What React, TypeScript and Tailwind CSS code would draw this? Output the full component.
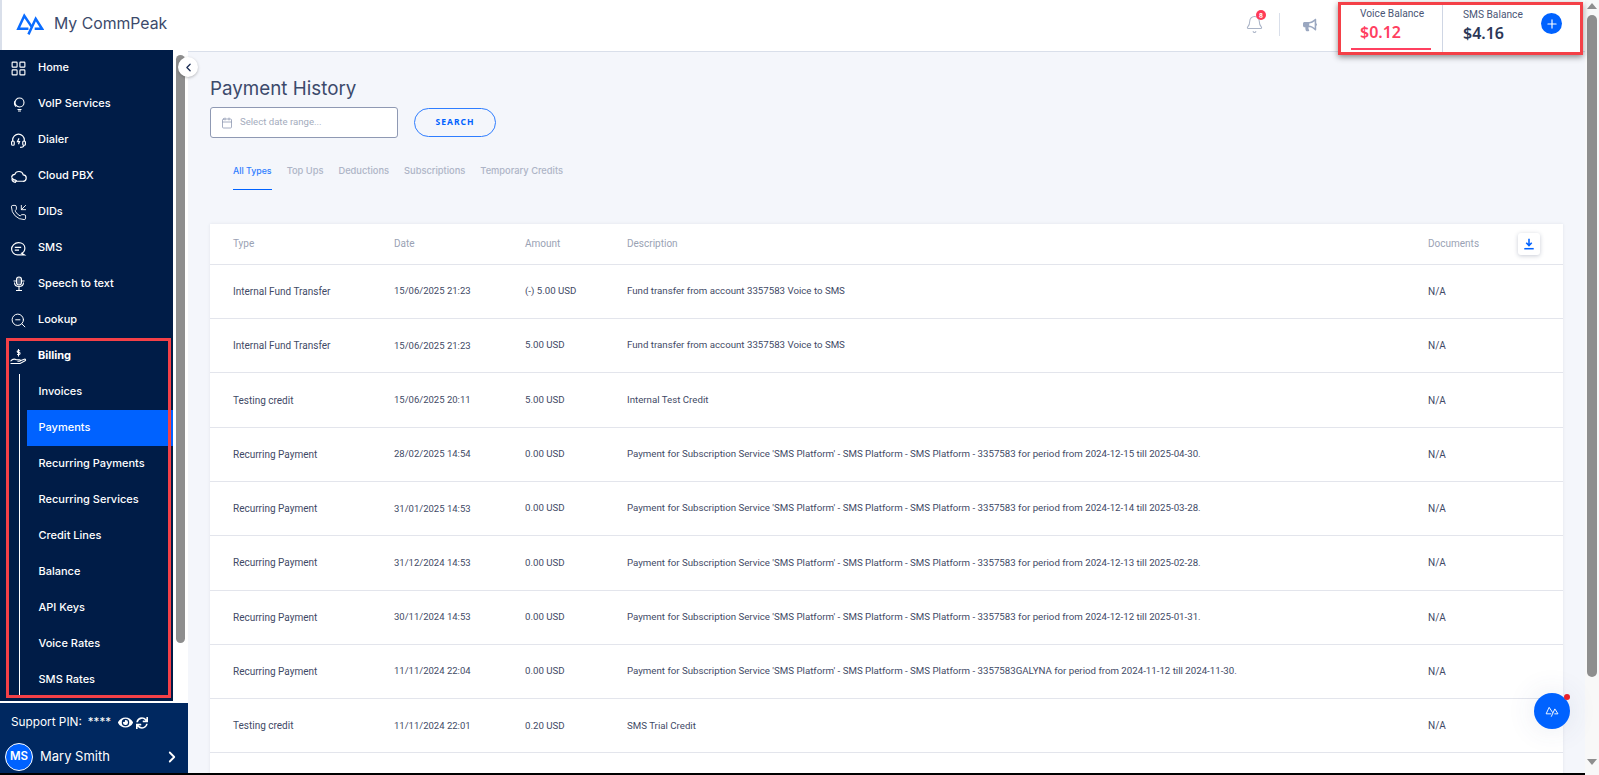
import React from 'react';
import { Bell, Calendar, ChevronLeft, ChevronRight, LayoutGrid, PhoneIncoming, Plus, ZoomOut } from 'lucide-react';
import { FaBullhorn, FaEye, FaSync } from 'react-icons/fa';

const Logo = ({ className, color, weight = 2.4 }: { className: string; color: string; weight?: number }) => (
  <svg viewBox="0 0 27 21" className={className} fill="none" stroke={color} strokeWidth={weight} strokeLinejoin="miter">
    <path d="M15 13 8 2.500 2.200 15H12" />
    <path d="M12 20.500 19 5.500 25 15H18" />
  </svg>
);

const VoipIcon = () => (
  <svg viewBox="0 0 16 16" className="h-4 w-4" fill="none" stroke="#fff" strokeWidth="1.100">
    <circle cx="8.500" cy="6.500" r="4.500" />
    <path d="M6.500 13.500h4M7 15h3M4 5c-1 2-.5 4 1 5.500" />
  </svg>
);
const DialerIcon = () => (
  <svg viewBox="0 0 16 16" className="h-[17px] w-[17px]" fill="none" stroke="#fff" strokeWidth="1.100">
    <path d="M2.500 9V7.500a5.500 5.500 0 0 1 11 0V9" />
    <rect x="1.500" y="8.500" width="2.500" height="4" rx="1" />
    <rect x="12" y="8.500" width="2.500" height="4" rx="1" />
    <path d="M8.500 6 7 9h2l-1 2.500M13 12.500c0 1.500-1.500 2-3.500 2" />
  </svg>
);
const CloudIcon = () => (
  <svg viewBox="0 0 16 16" className="h-[17px] w-[17px]" fill="none" stroke="#fff" strokeWidth="1.100">
    <path d="M5 12.500h7a3 3 0 0 0 .5-6A4.200 4.200 0 0 0 4.500 6 3.200 3.200 0 0 0 1.500 9" />
    <path d="M2 9.500c-.5 2 1 3.500 3 4l1-1.500-1.500-1-.7.5-.8-1z" />
  </svg>
);
const SmsIcon = () => (
  <svg viewBox="0 0 16 16" className="h-[17px] w-[17px]" fill="none" stroke="#fff" strokeWidth="1.100">
    <path d="M8 2.500c3.500 0 6 2 6 5s-2 4.500-3 5l2.500 1.500H7c-3 0-5.500-2.500-5.500-5.500S4.500 2.500 8 2.500z" />
    <path d="M4.500 7h6M4.500 9.500h4" />
  </svg>
);
const SpeechIcon = () => (
  <svg viewBox="0 0 16 16" className="h-4 w-4" fill="none" stroke="#fff" strokeWidth="1.100">
    <rect x="5.500" y="1" width="5" height="8" rx="2.500" fill="#fff" fillOpacity=".3" />
    <path d="M2.500 5h3M10.500 5h3M3.500 6.500c0 3 2 4 4.500 4s4.500-1 4.500-4M8 10.500V14M5 14.500h6" />
  </svg>
);
const BillingIcon = () => (
  <svg viewBox="0 0 16 16" className="h-[17px] w-[17px]" fill="none" stroke="#fff" strokeWidth="1">
    <path d="M.5 12.500c1.500-2 3.500-2.500 5.500-1.500h3c1 0 1 1.500 0 1.500H7M9.500 12l4-1.500c1.200-.3 1.600 1 .7 1.500l-4.700 2.500H.5" />
    <path d="M9.500 2.500h-2c-1 0-1 1.800 0 1.800h1.200c1 0 1 1.800 0 1.800h-2M8 1v7" />
  </svg>
);
const DownloadTray = () => (
  <svg viewBox="0 0 14 14" className="h-[12px] w-[12px]" fill="none" stroke="#0062ff" strokeWidth="1.800">
    <path d="M7 1v7M3.800 5.500 7 8.800l3.200-3.300" />
    <path d="M1.500 12.500h11" />
  </svg>
);

const topItems = [
  { label: 'Home', icon: <LayoutGrid className="h-[17px] w-[17px]" strokeWidth={1.6} /> },
  { label: 'VoIP Services', icon: <VoipIcon /> },
  { label: 'Dialer', icon: <DialerIcon /> },
  { label: 'Cloud PBX', icon: <CloudIcon /> },
  { label: 'DIDs', icon: <PhoneIncoming className="h-[17px] w-[17px]" strokeWidth={1.3} /> },
  { label: 'SMS', icon: <SmsIcon /> },
  { label: 'Speech to text', icon: <SpeechIcon /> },
  { label: 'Lookup', icon: <ZoomOut className="h-[17px] w-[17px]" strokeWidth={1.4} /> },
];

const billingItems = ['Invoices', 'Payments', 'Recurring Payments', 'Recurring Services', 'Credit Lines', 'Balance', 'API Keys', 'Voice Rates', 'SMS Rates'];

const tabs = ['All Types', 'Top Ups', 'Deductions', 'Subscriptions', 'Temporary Credits'];

const rows = [
  ['Internal Fund Transfer', '15/06/2025 21:23', '(-) 5.00 USD', 'Fund transfer from account 3357583 Voice to SMS'],
  ['Internal Fund Transfer', '15/06/2025 21:23', '5.00 USD', 'Fund transfer from account 3357583 Voice to SMS'],
  ['Testing credit', '15/06/2025 20:11', '5.00 USD', 'Internal Test Credit'],
  ['Recurring Payment', '28/02/2025 14:54', '0.00 USD', "Payment for Subscription Service 'SMS Platform' - SMS Platform - SMS Platform - 3357583 for period from 2024-12-15 till 2025-04-30."],
  ['Recurring Payment', '31/01/2025 14:53', '0.00 USD', "Payment for Subscription Service 'SMS Platform' - SMS Platform - SMS Platform - 3357583 for period from 2024-12-14 till 2025-03-28."],
  ['Recurring Payment', '31/12/2024 14:53', '0.00 USD', "Payment for Subscription Service 'SMS Platform' - SMS Platform - SMS Platform - 3357583 for period from 2024-12-13 till 2025-02-28."],
  ['Recurring Payment', '30/11/2024 14:53', '0.00 USD', "Payment for Subscription Service 'SMS Platform' - SMS Platform - SMS Platform - 3357583 for period from 2024-12-12 till 2025-01-31."],
  ['Recurring Payment', '11/11/2024 22:04', '0.00 USD', "Payment for Subscription Service 'SMS Platform' - SMS Platform - SMS Platform - 3357583GALYNA for period from 2024-11-12 till 2024-11-30."],
  ['Testing credit', '11/11/2024 22:01', '0.20 USD', 'SMS Trial Credit'],
];

export default function App() {
  return (
    <div className="relative flex h-screen overflow-hidden bg-white font-['Inter',sans-serif]">
      <div className="flex min-w-0 flex-1 flex-col">
        {/* Header */}
        <header className="relative z-20 flex h-[50px] shrink-0 items-start border-l-2 border-[#d9dfea] bg-white">
          <div className="flex h-[48px] items-center pl-[14px]">
            <Logo className="h-[22px] w-[28px]" color="#0a6cff" />
            <span className="ml-[10px] text-[15.800px] text-[#3c4a6b]">My CommPeak</span>
          </div>
          <div className="ml-auto flex h-[49px] items-center">
            <div className="relative mr-[15px]">
              <Bell className="h-[19px] w-[19px] text-[#a9b3c6]" strokeWidth={1.3} />
              <span className="absolute -right-[2px] -top-[5px] flex h-[10px] w-[10px] items-center justify-center rounded-full bg-[#ff3b57] text-[6px] font-bold text-white">8</span>
            </div>
            <div className="h-[23px] w-px bg-[#d9dfea]" />
            <FaBullhorn className="ml-[23px] mr-[21px] h-[14px] w-[14px] text-[#9aa7c0]" />
            <div className="mr-[2px] mt-[7px] flex h-[53px] w-[245px] border-[3px] border-[#f44047] bg-white shadow-[0_2px_6px_rgba(0,0,0,0.45)]">
              <div className="flex w-[102px] flex-col border-r border-[#cfd6e4] pl-[10px] font-['Roboto',sans-serif]">
                <div className="flex h-[43px] flex-col pl-[9px]">
                  <span className="text-[10.200px] leading-[17px] text-[#4a5675]">Voice Balance</span>
                  <span className="font-['Noto_Sans',sans-serif] text-[16px] font-semibold leading-[21px] text-[#ff4060]">$0.12</span>
                </div>
                <div className="h-[2px] w-[80px] bg-[#ff4060]" />
              </div>
              <div className="flex flex-1 items-center justify-between pl-[20px] pr-[18px] font-['Roboto',sans-serif]">
                <div className="flex flex-col pb-[7px]">
                  <span className="text-[10.200px] leading-[17px] text-[#4a5675]">SMS Balance</span>
                  <span className="font-['Noto_Sans',sans-serif] text-[16px] font-semibold leading-[21px] text-[#2c3757]">$4.16</span>
                </div>
                <span className="mb-[9px] flex h-[21px] w-[21px] items-center justify-center rounded-full bg-[#0062ff]">
                  <Plus className="h-[14px] w-[14px] text-white" strokeWidth={2} />
                </span>
              </div>
            </div>
          </div>
        </header>

        <div className="flex min-h-0 flex-1">
          {/* Sidebar */}
          <aside className="relative z-10 flex w-[188px] shrink-0 flex-col bg-white">
            <div className="flex min-h-0 flex-1">
              <nav className="h-[651px] w-[173px] overflow-hidden bg-[#001c47] text-[11px] font-medium text-white">
                {topItems.map((item) => (
                  <div key={item.label} className="flex h-[36px] items-center pl-[10px]">
                    <span className="flex w-[17px] justify-center">{item.icon}</span>
                    <span className="ml-[11px] pb-[2px]">{item.label}</span>
                  </div>
                ))}
                <div className="relative">
                  <div className="flex h-[36px] items-center pl-[10px]">
                    <BillingIcon />
                    <span className="ml-[11px] pb-[2px] font-bold">Billing</span>
                  </div>
                  <div className="ml-[19px] border-l border-white">
                    {billingItems.map((label) => (
                      <div
                        key={label}
                        className={label === 'Payments' ? 'ml-[7px] flex h-[36px] items-center bg-[#0062ff] pb-[2px] pl-[11.500px]' : 'ml-[7px] flex h-[36px] items-center pb-[2px] pl-[11.500px]'}
                      >
                        {label}
                      </div>
                    ))}
                  </div>
                  <div className="pointer-events-none absolute bottom-0 left-[6px] top-0 w-[165px] border-[3px] border-[#f44047]" />
                </div>
              </nav>
              <div className="ml-[3px] mt-[5px] h-[588px] w-[9px] rounded-full bg-[#8e8e8e]" />
            </div>
            <div className="h-[70px] shrink-0 bg-[#002860] text-white">
              <div className="flex h-[36px] items-center pl-[11px] pt-[3px] text-[11.800px]">
                <span>Support PIN:</span>
                <span className="ml-[6px] text-[11.500px]">****</span>
                <FaEye className="ml-[7px] h-[15px] w-[15px]" />
                <FaSync className="ml-[3px] h-[12px] w-[12px]" />
              </div>
              <div className="mt-[4px] flex items-center pl-[5px] pr-[7px]">
                <span className="flex h-[28px] w-[28px] items-center justify-center rounded-full border border-white bg-[#0062ff] text-[11.500px] font-semibold">MS</span>
                <span className="ml-[7px] text-[13px]">Mary Smith</span>
                <ChevronRight className="ml-auto h-[18px] w-[18px]" strokeWidth={2.4} />
              </div>
            </div>
            <span className="absolute left-[178px] top-[7px] flex h-[20px] w-[20px] items-center justify-center rounded-full bg-white shadow-[0_1px_3px_rgba(0,0,0,0.25)]">
              <ChevronLeft className="h-[13px] w-[13px] text-[#1c2d55]" strokeWidth={2.4} />
            </span>
          </aside>

          {/* Main */}
          <main className="mt-[1px] min-w-0 flex-1 overflow-hidden border-t border-[#d9dfea] bg-[#f4f6fb] pl-[22px] pr-[22px] pt-[24px]">
            <h1 className="text-[18.800px] leading-[26px] text-[#3c4a6b]">Payment History</h1>
            <div className="mt-[5px] flex items-center">
              <div className="flex h-[31px] w-[188px] items-center rounded-[3px] border border-[#8f99b3] bg-white pl-[10px]">
                <Calendar className="h-[12px] w-[12px] text-[#8f99b3]" strokeWidth={1.6} />
                <span className="ml-[7px] font-['Roboto',sans-serif] text-[9.600px] text-[#a4acbd]">Select date range...</span>
              </div>
              <button className="ml-[16px] h-[29px] w-[82px] rounded-full border border-[#2f7dff] font-['Noto_Sans',sans-serif] text-[8.500px] font-bold tracking-[1px] text-[#0062ff]">SEARCH</button>
            </div>
            <div className="mt-[26px] flex gap-[15px] pl-[23px] text-[9.300px] font-medium text-[#adb4c6]">
              {tabs.map((tab) => (
                <div key={tab} className={tab === 'All Types' ? 'border-b-[1px] border-[#0062ff] pb-[11px] text-[8.800px] leading-[14px] text-[#2f7dff]' : 'pb-[11px] leading-[14px]'}>
                  {tab}
                </div>
              ))}
            </div>
            <section className="mt-[34px] bg-white font-['Roboto',sans-serif] text-[10px] shadow-[0_0_3px_rgba(60,70,100,0.1)]">
              <div className="flex h-[40.800px] items-center border-b border-[#e3e5ec] pl-[23px] text-[#9aa2b4]">
                <span className="w-[161px]">Type</span>
                <span className="w-[131px]">Date</span>
                <span className="w-[102px]">Amount</span>
                <span className="w-[801px]">Description</span>
                <span className="w-[90px]">Documents</span>
                <span className="flex h-[22px] w-[22px] items-center justify-center rounded-[3px] bg-white shadow-[0_1px_4px_rgba(40,50,90,0.25)]">
                  <DownloadTray />
                </span>
              </div>
              {rows.map((row, i) => (
                <div key={i} className="flex h-[54.300px] items-center border-b border-[#e3e5ec] pl-[23px] text-[#3f4a66]">
                  <span className="w-[161px]">{row[0]}</span>
                  <span className="w-[131px] text-[9.500px]">{row[1]}</span>
                  <span className="w-[102px] text-[9.700px]">{row[2]}</span>
                  <span className="w-[801px] text-[9.700px]">{row[3]}</span>
                  <span>N/A</span>
                </div>
              ))}
              <div className="h-[60px]" />
            </section>
          </main>
        </div>
        <div className="h-[2px] shrink-0 bg-black" />
      </div>

      {/* Page scrollbar */}
      <div className="flex w-[14px] shrink-0 flex-col items-center bg-[#f8f8f8] pt-[3px]">
        <span className="h-0 w-0 border-x-[5px] border-b-[6px] border-x-transparent border-b-[#8e8e8e]" />
        <span className="mt-[6px] h-[662px] w-[10px] rounded-full bg-[#8e8e8e]" />
        <span className="mt-[82px] h-0 w-0 border-x-[5px] border-t-[6px] border-x-transparent border-t-[#8e8e8e]" />
      </div>

      {/* Chat button */}
      <span className="absolute left-[1534px] top-[693px] flex h-[36px] w-[36px] items-center justify-center rounded-full bg-[#0062ff] shadow-[0_0_30px_rgba(60,70,130,0.12)]">
        <Logo className="h-[11px] w-[14px]" color="#fff" weight={1.8} />
        <span className="absolute right-0 top-[1px] h-[6px] w-[6px] rounded-full bg-[#e8202a]" />
      </span>
    </div>
  );
}
